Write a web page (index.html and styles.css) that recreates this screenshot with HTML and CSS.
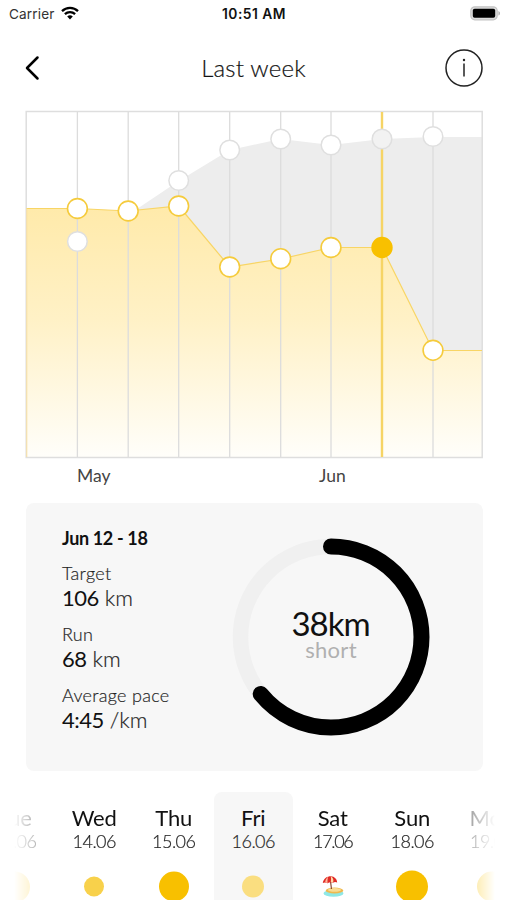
FILE: index.html
```html
<!DOCTYPE html>
<html lang="en">
<head>
    <meta charset="UTF-8">
    <meta name="viewport" content="width=device-width, initial-scale=1">
    <title>Last week</title>
    <link rel="stylesheet" href="styles.css">
</head>
<body>

<div class="status-bar">
    <div class="carrier">
        <span>Carrier</span>
        <svg class="wifi" width="18" height="14" viewBox="0 0 18 14" fill="none" stroke="#000" stroke-width="2.3">
            <path d="M1 5.2A11.5 11.5 0 0 1 17 5.2"/>
            <path d="M3.9 8.2A7.4 7.4 0 0 1 14.1 8.2"/>
            <path d="M6.2 10.6A4 4 0 0 1 11.8 10.6L9 13.6Z" fill="#000" stroke="none"/>
        </svg>
    </div>
    <span class="clock">10:51 AM</span>
    <svg class="battery" width="31" height="15" viewBox="0 0 31 15">
        <rect x=".8" y=".8" width="26.4" height="13" rx="4" fill="#ddd" stroke="#c4c4c4" stroke-width="1.2"/>
        <rect x="2.8" y="2.8" width="22.4" height="9" rx="1.8"/>
        <path d="M28.4 5v4.6c2.2-.8 2.2-3.8 0-4.6z" fill="#b5b5b5"/>
    </svg>
</div>

<header>
    <svg class="back" width="16" height="26" viewBox="0 0 16 26" fill="none" stroke="#000" stroke-width="2.5" stroke-linecap="round" stroke-linejoin="round">
        <path d="M13.5 2.5L3 13L13.5 23.5"/>
    </svg>
    <h1>Last week</h1>
    <svg class="info" width="38" height="38" viewBox="0 0 38 38" fill="none" stroke="#222" stroke-width="1.5">
        <circle cx="19" cy="19" r="18"/>
        <path d="M19 14.5V27.5"/>
        <circle cx="19" cy="11" r="1.2" fill="#222" stroke="none"/>
    </svg>
</header>

<svg class="chart" width="459" height="349" viewBox="25 110 459 349">
    <defs>
        <linearGradient id="fill" gradientUnits="userSpaceOnUse" x1="0" y1="206" x2="0" y2="457">
            <stop offset="0" stop-color="#ffeaaa"/>
            <stop offset=".45" stop-color="#fff1c6"/>
            <stop offset="1" stop-color="#fffefa"/>
        </linearGradient>
    </defs>
    <path class="target-area" d="M128 215L178.700 181L229.700 150L280.700 139L331 145L382 139L433 137H482V457H128Z"/>
    <path class="run-area" d="M26 208.500H77L128 211L178.700 206L229.700 267L280.700 259L331 247.500H382L433 350.500H482V457H26Z"/>
    <path class="frame" d="M26.200 111.500H482.200V457.500H26.200Z"/>
    <path class="grid" d="M77.400 112V457M128.200 112V457M178.700 112V457M229.700 112V457M280.700 112V457M331 112V457M433 112V457"/>
    <path class="run-line" d="M26.500 208.500H77L128 211L178.700 206L229.700 267L280.700 259L331 247.500H382L433 350.500H482"/>
    <path class="run-line edge" d="M26.800 208.500V457"/>
    <path class="current" d="M382 112V457"/>
    <g class="target-dots">
        <circle cx="77.400" cy="241.500" r="9.800"/>
        <circle cx="178.700" cy="180.500" r="9.800"/>
        <circle cx="229.700" cy="150" r="9.800"/>
        <circle cx="280.700" cy="139" r="9.800"/>
        <circle cx="331" cy="145" r="9.800"/>
        <circle cx="382" cy="139" r="9.800" class="dim"/>
        <circle cx="433" cy="136.500" r="9.800"/>
    </g>
    <g class="run-dots">
        <circle cx="77.400" cy="208.500" r="9.900"/>
        <circle cx="128.200" cy="211" r="9.900"/>
        <circle cx="178.700" cy="206" r="9.900"/>
        <circle cx="229.700" cy="267" r="9.900"/>
        <circle cx="280.700" cy="258.700" r="9.900"/>
        <circle cx="331" cy="247.500" r="9.900"/>
        <circle cx="382" cy="247.500" r="9.900" class="selected"/>
        <circle cx="433" cy="350.300" r="9.900"/>
    </g>
</svg>
<div class="months">
    <span>May</span>
    <span>Jun</span>
</div>

<section class="summary">
    <div class="stats">
        <h2>Jun 12 - 18</h2>
        <dl>
            <dt>Target</dt>
            <dd><b>106</b> km</dd>
            <dt>Run</dt>
            <dd><b>68</b> km</dd>
            <dt>Average pace</dt>
            <dd><b>4:45</b> /km</dd>
        </dl>
    </div>
    <div class="ring">
        <svg width="198" height="198" viewBox="0 0 198 198" fill="none">
            <circle cx="99" cy="99" r="90.500" stroke="#f0f0f0" stroke-width="15.500"/>
            <circle cx="99" cy="99" r="90.500" stroke="#000" stroke-width="16" stroke-linecap="round" pathLength="106" stroke-dasharray="68 106" transform="rotate(-90 99 99)"/>
        </svg>
        <div class="ring-text">
            <strong>38km</strong>
            <span>short</span>
        </div>
    </div>
</section>

<div class="days-wrap">
    <div class="days">
        <div class="day"><b>Tue</b><span>13.06</span><i class="dot m"></i></div>
        <div class="day"><b>Wed</b><span>14.06</span><i class="dot s"></i></div>
        <div class="day"><b>Thu</b><span>15.06</span><i class="dot l"></i></div>
        <div class="day active"><b>Fri</b><span>16.06</span><i class="dot pale"></i></div>
        <div class="day"><b>Sat</b><span class="tight">17.06</span>
            <svg class="rest" width="22" height="22" viewBox="0 0 22 22">
                <ellipse cx="11.500" cy="17.700" rx="10" ry="3.600" fill="#8fe8e6"/>
                <ellipse cx="12.500" cy="15" rx="8.800" ry="3" fill="#efb94f"/>
                <ellipse cx="12.500" cy="14.400" rx="6.500" ry="1.800" fill="#f9dc93"/>
                <path d="M8.500 6L9.500 13.500" stroke="#8a4a30" stroke-width="1.200"/>
                <path d="M.8 7.500C1.500 2.500 6 .6 9 .8C12.500 1 15 3.700 15.200 7Q13 5.700 11 7.200Q8 6.100 5.600 7.800Q3 6.500 .8 7.500Z" fill="#e02c26"/>
                <path d="M3.200 6.700C3.400 4.300 4.600 2.300 6.200 1.300C5.500 3.300 5.300 5.500 5.600 7.800Q4.500 7 3.200 6.700Z" fill="#ffb79c"/>
                <path d="M8.800 6.600C9.200 4.500 9.200 2.500 8.800 .8C11.200 2.300 12 4.400 11 7.200Q10 6.600 8.800 6.600Z" fill="#ffd9a8"/>
            </svg>
        </div>
        <div class="day"><b>Sun</b><span>18.06</span><i class="dot xl"></i></div>
        <div class="day"><b>Mon</b><span>19.06</span><i class="dot l"></i></div>
    </div>
</div>

</body>
</html>
```
FILE: styles.css
```css
:root {
    --yellow: #f8c000;
    --line: #dedede;
    --panel: #f7f7f7;
}

* { box-sizing: border-box; }

body {
    margin: 0;
    height: 900px;
    overflow: hidden;
    background: #fff;
    color: #111;
    font-family: Lato, "Liberation Sans", sans-serif;
}

svg { display: block; }

/* status bar */
.status-bar {
    display: grid;
    grid-template-columns: 1fr auto 1fr;
    align-items: center;
    height: 28px;
    padding: 0 8px 0 9px;
    font-family: Inter, sans-serif;
    font-size: 13.3px;
}
.carrier { display: flex; align-items: center; gap: 6px; color: #333; letter-spacing: 0.4px; }
.wifi { margin-top: -2px; }
.clock { font-weight: 600; font-size: 13.8px; letter-spacing: 0.5px; }
.carrier span { font-size: 13.6px; letter-spacing: 0.15px; }
.battery { justify-self: end; margin: -2px -2px 0 0; }

header {
    display: flex;
    align-items: center;
    justify-content: space-between;
    height: 82px;
    padding: 0 24px 2px;
}
.back { margin-right: 22px; }
h1 { margin: -2px 0 0; font-size: 24px; font-weight: 300; letter-spacing: 0.2px; color: #111; -webkit-text-stroke: 0.2px #222; }

/* chart */
.chart { margin-left: 25px; }
.target-area { fill: #ededed; }
.run-area { fill: url(#fill); }
.frame { fill: none; stroke: var(--line); stroke-width: 1.5; }
.grid { stroke: #dcdcdc; stroke-width: 1.3; }
.run-line { fill: none; stroke: #f8d565; stroke-width: 1.2; }
.run-line.edge { stroke: #f9e0a0; stroke-width: 1; }
.current { stroke: #f6d465; stroke-width: 2.4; }
.target-dots { fill: #fff; stroke: #dfdfdf; stroke-width: 1.5; }
.target-dots .dim { fill: #f2f2f2; }
.run-dots { fill: #fff; stroke: #f5cb3c; stroke-width: 1.6; }
.run-dots .selected { fill: var(--yellow); stroke: var(--yellow); }

.months {
    display: grid;
    grid-template-columns: 242px auto;
    height: 44px;
    padding: 5px 0 0 77px;
    font-size: 17.5px;
    line-height: 24px;
    color: #444;
}

/* weekly summary */
.summary {
    display: flex;
    justify-content: space-between;
    height: 268px;
    margin: 0 24px 0 26px;
    padding: 22px 53px 0 36px;
    border-radius: 8px;
    background: var(--panel);
}
h2 { margin: 0; font-size: 18px; line-height: 26px; font-weight: 700; letter-spacing: -0.35px; }
dl { margin: 9px 0 0; }
dt { font-size: 18px; line-height: 26px; font-weight: 300; letter-spacing: 0.3px; color: #222; -webkit-text-stroke: 0.2px #333; }
dd { margin: 0 0 11px; font-size: 22px; line-height: 24px; font-weight: 300; color: #222; -webkit-text-stroke: 0.2px #333; }
dd b { font-weight: 400; letter-spacing: -0.5px; color: #111; -webkit-text-stroke: 0; }
.ring { display: grid; height: 198px; margin-top: 13px; }
.ring > * { grid-area: 1 / 1; }
.ring-text { display: flex; flex-direction: column; align-items: center; padding-top: 69px; }
.ring-text strong { font-size: 33px; line-height: 32px; font-weight: 400; letter-spacing: -1px; margin-right: 1px; }
.ring-text span { font-size: 22px; line-height: 22px; letter-spacing: 0.3px; color: #b0b0b0; }

/* days strip */
.days-wrap {
    margin-top: 21px;
    overflow: hidden;
    -webkit-mask-image: linear-gradient(90deg, transparent 14px, #000 76px, #000 431px, transparent 495px);
    mask-image: linear-gradient(90deg, transparent 14px, #000 76px, #000 431px, transparent 495px);
}
.days { display: flex; width: 556.500px; margin-left: -25px; }
.day {
    display: flex;
    flex: 0 0 79.5px;
    flex-direction: column;
    align-items: center;
    position: relative;
    height: 120px;
    padding-top: 12px;
    border-radius: 8px 8px 0 0;
}
.day.active { background: var(--panel); }
.day b { font-size: 22px; line-height: 28px; font-weight: 400; letter-spacing: -0.1px; }
.day span { font-size: 18px; line-height: 18px; font-weight: 300; letter-spacing: -0.5px; color: #222; -webkit-text-stroke: 0.2px #333; }
.day .tight { letter-spacing: -1.3px; }
.dot, .rest { margin: auto 0; flex: none; }
.dot { width: 20px; height: 20px; border-radius: 50%; background: var(--yellow); }
.day .dot, .day .rest { transform: translateY(5.5px); }
.s { background: #f8d14b; }
.m { width: 31px; height: 31px; background: #fbd75f; }
.l { width: 30px; height: 30px; }
.xl { width: 32px; height: 32px; }
.pale { width: 22px; height: 22px; background: #fade80; }
```
